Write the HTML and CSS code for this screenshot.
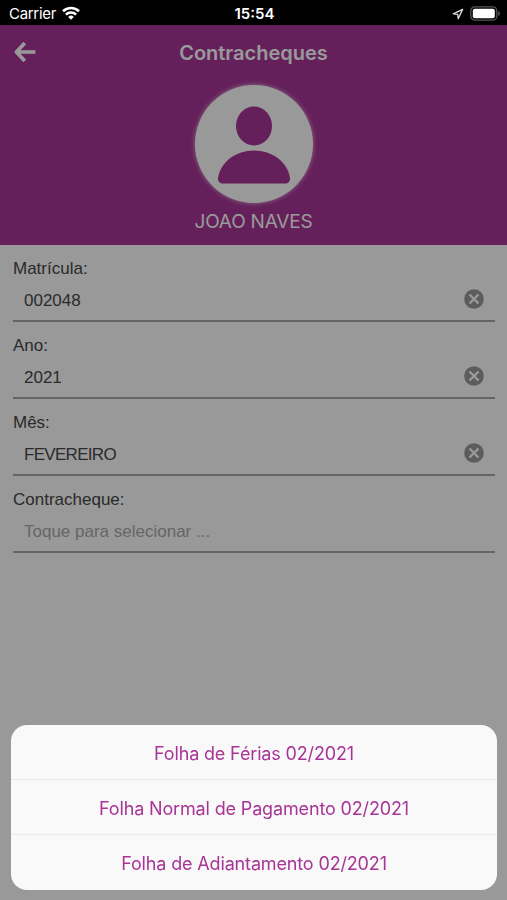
FILE: index.html
```
<!DOCTYPE html>
<html lang="pt-BR">

<head>
  <meta charset="UTF-8" />
  <meta name="viewport" content="width=device-width, initial-scale=1.0" />
  <title>Contracheques</title>
  <link rel="stylesheet" href="styles.css">
</head>

<body>
  <div class="status-bar">
    <div class="status-left">
      <span class="carrier">Carrier</span>
      <svg class="wifi" viewBox="0 0 18 14" width="18" height="14">
        <g fill="none" stroke="#fff" stroke-width="2.6">
          <path d="M1 5.300a11.500 11.500 0 0 1 16 0" />
          <path d="M3.900 8.600a7.300 7.300 0 0 1 10.200 0" />
        </g>
        <path d="M9 13.800l-2.800-2.900a4 4 0 0 1 5.600 0z" fill="#fff" />
      </svg>
    </div>
    <span class="time">15:54</span>
    <div class="status-right">
      <svg viewBox="0 0 12 12" width="12" height="12">
        <path d="M10.600 1.400L1.300 5.800l4.400.6.5 4.300z" fill="none" stroke="#ddd" stroke-width="1.300" stroke-linejoin="round" />
      </svg>
      <svg viewBox="0 0 31 15" width="31" height="15">
        <rect x=".8" y=".8" width="26" height="13.400" rx="4" fill="none" stroke="#555" stroke-width="1.300" />
        <rect x="2.800" y="2.800" width="22" height="9.400" rx="2" fill="#fff" />
        <path d="M28.300 5v5a2.800 2.800 0 0 0 0-5z" fill="#666" />
      </svg>
    </div>
  </div>

  <main class="page">
    <header class="header">
      <div class="nav">
        <svg class="back" viewBox="0 0 22 22" width="22" height="22">
          <path d="M10.800 2L2.400 11l8.400 9M2.400 11h19" fill="none" stroke="#fff" stroke-width="3.700" stroke-linejoin="round" />
        </svg>
        <h1>Contracheques</h1>
      </div>
      <div class="avatar">
        <svg viewBox="0 0 118 118" width="118" height="118">
          <ellipse cx="59" cy="41" rx="18" ry="19.500" />
          <path d="M28 98.500C25 98.500 23 97 23 93.500C25 77 41 65.500 59 65.500S93 77 95 93.500C95 97 93 98.500 90 98.500z" />
        </svg>
      </div>
      <p class="user">JOAO NAVES</p>
    </header>

    <form class="form">
      <div class="field">
        <span class="label">Matrícula:</span>
        <div class="input">
          <span>002048</span>
          <svg class="clear" viewBox="0 0 20 20" width="20" height="20">
            <circle cx="10" cy="10" r="9.800" />
            <path d="M5.500 5.500l9 9M14.500 5.500l-9 9" />
          </svg>
        </div>
      </div>
      <div class="field">
        <span class="label">Ano:</span>
        <div class="input">
          <span>2021</span>
          <svg class="clear" viewBox="0 0 20 20" width="20" height="20">
            <circle cx="10" cy="10" r="9.800" />
            <path d="M5.500 5.500l9 9M14.500 5.500l-9 9" />
          </svg>
        </div>
      </div>
      <div class="field">
        <span class="label">Mês:</span>
        <div class="input">
          <span class="month">FEVEREIRO</span>
          <svg class="clear" viewBox="0 0 20 20" width="20" height="20">
            <circle cx="10" cy="10" r="9.800" />
            <path d="M5.500 5.500l9 9M14.500 5.500l-9 9" />
          </svg>
        </div>
      </div>
      <div class="field">
        <span class="label">Contracheque:</span>
        <div class="input">
          <span class="placeholder">Toque para selecionar ...</span>
        </div>
      </div>
    </form>
  </main>

  <div class="backdrop">
    <div class="sheet">
      <div class="option">Folha de Férias 02/2021</div>
      <div class="option">Folha Normal de Pagamento 02/2021</div>
      <div class="option">Folha de Adiantamento 02/2021</div>
    </div>
  </div>
</body>

</html>
```
FILE: styles.css
```
* {
  box-sizing: border-box;
}

body {
  margin: 0;
  height: 900px;
  background: #fff;
  font-family: "Liberation Sans", Arial, sans-serif;
  overflow: hidden;
}

.status-bar {
  display: grid;
  grid-template-columns: 1fr auto 1fr;
  align-items: center;
  height: 25px;
  padding: 2px 6px 0 9px;
  background: #000;
  color: #fff;
  font-family: Inter, sans-serif;
  font-size: 15px;
}

.status-left {
  display: flex;
  align-items: center;
  gap: 6px;
}

.carrier {
  letter-spacing: -0.3px;
}

.wifi {
  margin-top: -2px;
}

.time {
  margin-right: 1px;
  font-weight: 600;
}

.status-right {
  display: flex;
  align-items: center;
  justify-content: flex-end;
  gap: 6px;
}

.header {
  display: flex;
  flex-direction: column;
  align-items: center;
  height: 220px;
  background: #a83496;
  color: #fff;
  font-family: Inter, sans-serif;
}

.nav {
  display: grid;
  grid-template-columns: 60px 1fr 60px;
  align-items: center;
  width: 100%;
  height: 54px;
}

.back {
  margin-left: 14px;
}

h1 {
  margin: 1px 0 0;
  font-size: 20px;
  font-weight: 600;
  text-align: center;
}

.avatar {
  width: 118px;
  height: 118px;
  margin-top: 6px;
  border-radius: 50%;
  background: #fff;
  box-shadow: 0 0 5px rgba(255, 255, 255, 0.7);
}

.avatar svg {
  display: block;
  fill: #a83496;
}

.user {
  margin: 6px 0 0;
  font-size: 19px;
  line-height: 26px;
  letter-spacing: -0.2px;
}

.form {
  padding: 0 12px 0 13px;
}

.field {
  height: 77px;
  padding-top: 14px;
  border-bottom: 2px solid #a8a8a8;
  color: #484848;
  font-size: 17px;
}

.label {
  display: block;
  line-height: 20px;
}

.input {
  display: flex;
  align-items: center;
  justify-content: space-between;
  height: 42px;
  padding: 0 11px;
}

.input span {
  padding-top: 2px;
}

.input .month {
  letter-spacing: -0.7px;
}

.clear {
  margin-bottom: 2px;
}

.clear circle {
  fill: #9a9a9a;
}

.clear path {
  stroke: #fff;
  stroke-width: 2.4;
}

.input .placeholder {
  color: #ababab;
}

.backdrop {
  position: fixed;
  top: 25px;
  right: 0;
  bottom: 0;
  left: 0;
  display: flex;
  align-items: flex-end;
  padding: 0 10px 10px 11px;
  background: rgba(0, 0, 0, 0.4);
}

.sheet {
  width: 100%;
  border-radius: 16px;
  background: #f9f9f9;
  overflow: hidden;
}

.option {
  height: 55px;
  line-height: 57px;
  color: #a83496;
  font-family: Inter, sans-serif;
  font-size: 18px;
  letter-spacing: -0.15px;
  text-align: center;
}

.option:not(:last-child) {
  border-bottom: 1px solid #ebebeb;
}
```
